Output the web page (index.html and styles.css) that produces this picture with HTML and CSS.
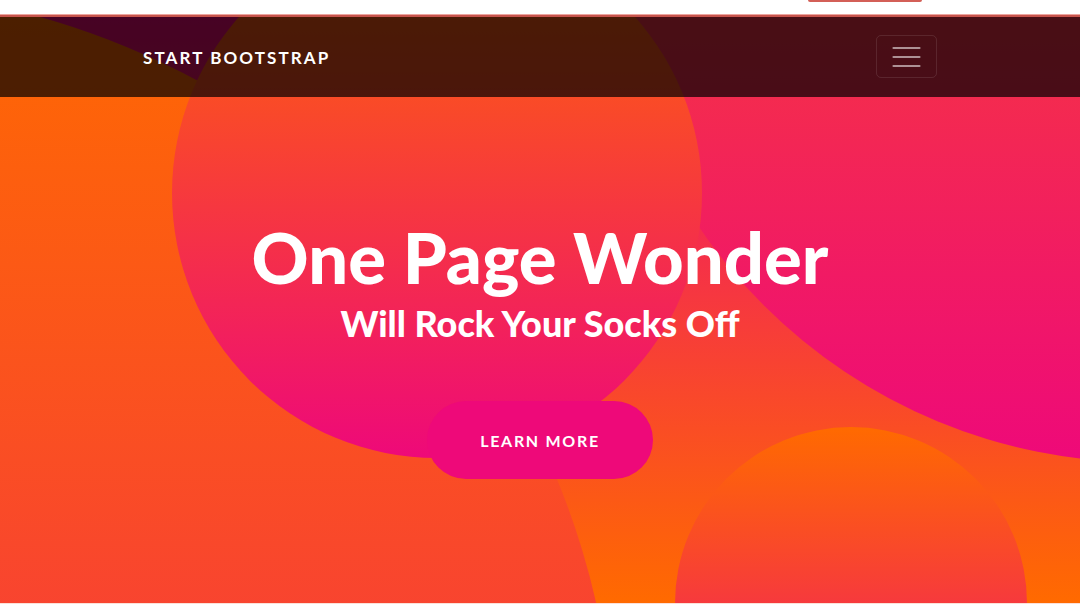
FILE: index.html
```html
<!DOCTYPE html>
<html lang="en">
<head>
<meta charset="utf-8">
<title>One Page Wonder</title>
<link rel="stylesheet" href="styles.css">
</head>
<body>
<div class="topbar"><span class="top-btn"></span></div>
<div class="topline"></div>
<header class="masthead">
  <div class="bg-circle c1"></div>
  <div class="bg-circle c2"></div>
  <div class="bg-circle c3"></div>
  <div class="bg-circle c4"></div>
  <nav class="navbar">
    <a class="brand" href="#">Start Bootstrap</a>
    <button class="toggler" type="button" aria-label="Toggle navigation">
      <svg width="29" height="30" viewBox="0 0 29 30" aria-hidden="true">
        <path d="M1.5 6H27.5M1.5 15H27.5M1.5 24H27.5" stroke="rgba(255,255,255,0.55)" stroke-width="2.2" stroke-linecap="round" fill="none"/>
      </svg>
    </button>
  </nav>
  <div class="masthead-content">
    <h1 class="heading">One Page Wonder</h1>
    <h2 class="subheading">Will Rock Your Socks Off</h2>
    <a class="btn-xl" href="#">Learn More</a>
  </div>
</header>
<div class="below"></div>
</body>
</html>
```

FILE: styles.css
```css
* { box-sizing: border-box; }

html, body {
  margin: 0;
  padding: 0;
  background: #ffffff;
}

body {
  font-family: Lato, "Liberation Sans", sans-serif;
  overflow: hidden;
}

.topbar {
  height: 14px;
  display: flex;
  padding-left: 808px;
}

.top-btn {
  display: block;
  width: 114px;
  height: 2px;
  background: #d35f57;
  border-radius: 0 0 3px 3px;
}

.topline {
  height: 3px;
  border-top: 1px solid #eca59f;
  background: #c7544c;
}

.masthead {
  position: relative;
  overflow: hidden;
  height: 586px;
  background: linear-gradient(0deg, #ff6a00 0%, #ee0979 100%);
}

.bg-circle {
  position: absolute;
  z-index: 0;
  border-radius: 50%;
  background: linear-gradient(180deg, #ff6a00 0%, #ee0979 100%);
}

.c1 { width: 1584px; height: 1584px; left: -968px; top: -30px; }
.c2 { width: 1070px; height: 1070px; left: 607px; top: -625px; }
.c3 { width: 352px; height: 352px; left: 675px; top: 410px; }
.c4 { width: 530px; height: 530px; left: 172px; top: -89px; }

.navbar {
  position: absolute;
  top: 0;
  left: 0;
  right: 0;
  z-index: 3;
  height: 80px;
  padding: 0 143px;
  display: flex;
  align-items: center;
  justify-content: space-between;
  background: rgba(0, 0, 0, 0.7);
}

.brand {
  color: #ffffff;
  text-decoration: none;
  text-transform: uppercase;
  font-family: Lato, "Liberation Sans", sans-serif;
  font-weight: 700;
  font-size: 17px;
  letter-spacing: 2.1px;
}

.toggler {
  width: 61px;
  height: 43px;
  padding: 0;
  margin-top: -1px;
  display: flex;
  align-items: center;
  justify-content: center;
  background: transparent;
  border: 1px solid rgba(255, 255, 255, 0.1);
  border-radius: 5px;
}

.toggler svg { display: block; }

.masthead-content {
  position: relative;
  z-index: 1;
  display: flex;
  flex-direction: column;
  align-items: center;
  text-align: center;
  padding-top: 198px;
  color: #ffffff;
}

.heading {
  margin: 0;
  font-family: Lato, "Open Sans", sans-serif;
  font-weight: 900;
  font-size: 70.5px;
  line-height: 84px;
  letter-spacing: 0;
}

.subheading {
  margin: 3px 0 0;
  font-family: Lato, "Open Sans", sans-serif;
  font-weight: 900;
  font-size: 36px;
  line-height: 42px;
  letter-spacing: 0;
}

.btn-xl {
  margin-top: 57px;
  width: 226px;
  height: 78px;
  display: flex;
  align-items: center;
  justify-content: center;
  border-radius: 39px;
  background: #ee0979;
  color: #ffffff;
  text-decoration: none;
  text-transform: uppercase;
  font-family: Lato, "Liberation Sans", sans-serif;
  font-weight: 700;
  font-size: 16px;
  letter-spacing: 1.7px;
}

.below {
  height: 8px;
  border-top: 1px solid #fbe0d8;
  background: #ffffff;
}
```
